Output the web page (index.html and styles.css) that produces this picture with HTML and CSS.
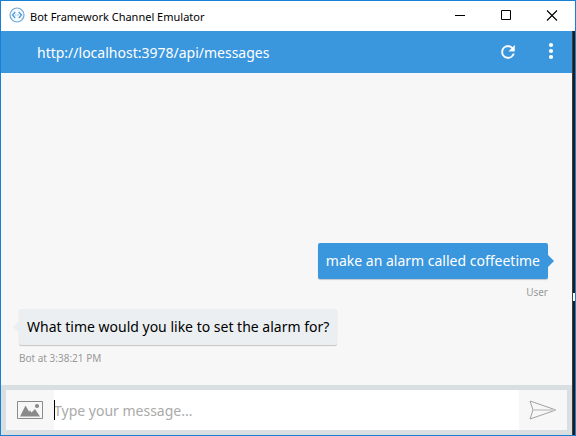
FILE: index.html
```html
<!DOCTYPE html>
<html lang="en">
<head>
<meta charset="utf-8">
<title>Bot Framework Channel Emulator</title>
<link rel="stylesheet" href="styles.css">
</head>
<body>
<div class="window">
  <header class="titlebar">
    <svg class="app-icon" viewBox="0 0 16 16" width="16" height="16" aria-hidden="true">
      <circle cx="8" cy="8" r="7" fill="#f4faff" stroke="#6fa9d8" stroke-width="1.2"/>
      <path d="M6.200 5 3.500 8l2.700 3M9.800 5 12.500 8l-2.700 3" fill="none" stroke="#4a98d6" stroke-width="1.200"/>
      <path d="M5.800 8h1M7.600 8h1M9.300 8h1" stroke="#7db5e2"/>
    </svg>
    <h1 class="title">Bot Framework Channel Emulator</h1>
    <div class="window-controls">
      <button class="window-button" type="button" aria-label="Minimize">
        <svg width="12" height="12" viewBox="0 0 12 12" shape-rendering="crispEdges"><path d="M1 5h10v1H1z"/></svg>
      </button>
      <button class="window-button" type="button" aria-label="Maximize">
        <svg width="12" height="12" viewBox="0 0 12 12"><path d="M1.500.5h9v9h-9z" fill="none" stroke="#000"/></svg>
      </button>
      <button class="window-button" type="button" aria-label="Close">
        <svg width="12" height="12" viewBox="0 0 12 12"><path d="M1 .5l10 10M11 .5l-10 10" stroke="#000" stroke-width="1.100"/></svg>
      </button>
    </div>
  </header>
  <div class="body">
    <main class="app">
      <nav class="toolbar">
        <a class="address" href="#">http://localhost:3978/api/messages</a>
        <button class="tool-button" type="button" aria-label="Refresh">
          <svg width="20" height="20" viewBox="0 0 24 24"><path fill="#fff" stroke="#fff" stroke-width=".4" d="M17.650 6.350A7.960 7.960 0 0 0 12 4a8 8 0 1 0 7.730 10h-2.080A6 6 0 1 1 12 6c1.660 0 3.140.69 4.220 1.780L13 11h7V4z"/></svg>
        </button>
        <button class="tool-button" type="button" aria-label="More options">
          <svg width="20" height="20" viewBox="0 0 20 20" fill="#fff"><circle cx="11" cy="3" r="2.100"/><circle cx="11" cy="9" r="2.100"/><circle cx="11" cy="15" r="2.100"/></svg>
        </button>
      </nav>
      <section class="chat">
        <article class="message from-user">
          <p class="bubble">make an alarm called coffeetime</p>
          <span class="meta">User</span>
        </article>
        <article class="message from-bot">
          <p class="bubble">What time would you like to set the alarm for?</p>
          <span class="meta">Bot at 3:38:21 PM</span>
        </article>
      </section>
      <form class="composer">
        <button class="composer-button" type="button" aria-label="Attach picture">
          <svg width="26" height="18" viewBox="0 0 26 18"><path d="M.5.5h25v17H.5z" fill="none" stroke="#8a8a8a"/><path d="M3 15.500 8.500 4.500l3.500 6 1-1 1.500 2 3.500-3.500 5 7.500z" fill="#8a8a8a"/><circle cx="20" cy="5" r="2.100" fill="#8a8a8a"/></svg>
        </button>
        <div class="field">
          <input class="message-input" type="text" placeholder="Type your message..." aria-label="Message">
          <span class="caret"></span>
        </div>
        <button class="composer-button" type="submit" aria-label="Send">
          <svg width="28" height="20" viewBox="0 0 28 20" fill="none" stroke="#a2a2a2"><path d="M1 1l26 9L1 19l3-9z"/><path d="M4 10h23" stroke="#c8c8c8" stroke-width="1.500"/></svg>
        </button>
      </form>
    </main>
    <div class="backdrop"><span class="backdrop-mark"></span></div>
  </div>
</div>
</body>
</html>
```

FILE: styles.css
```css
* {
  box-sizing: border-box;
}

body {
  margin: 0;
  font-family: "Noto Sans", "Open Sans", sans-serif;
}

button {
  display: flex;
  align-items: center;
  justify-content: center;
  padding: 0;
  border: 0;
  background: none;
}

.window {
  display: flex;
  flex-direction: column;
  min-height: 100vh;
  border: 1px solid #1a80d4;
  background: #fff;
}

.titlebar {
  display: flex;
  align-items: center;
  height: 30px;
  padding-left: 8px;
}

.app-icon {
  margin-bottom: 2px;
}

.title {
  flex: 1;
  margin: 0 0 0 5px;
  font-size: 11px;
  font-weight: 400;
  color: #000;
}

.window-controls {
  display: flex;
}

.window-button {
  width: 46px;
  height: 30px;
}

.body {
  display: flex;
  flex: 1;
}

.app {
  display: flex;
  flex: 1;
  flex-direction: column;
  background: #f7f7f7;
}

.toolbar {
  display: flex;
  align-items: center;
  height: 42px;
  padding: 0 1px 0 36px;
  background: #3a96dd;
}

.address {
  flex: 1;
  font-size: 14px;
  color: #fff;
  text-decoration: none;
}

.tool-button {
  width: 42px;
  height: 42px;
}

.chat {
  display: flex;
  flex: 1;
  flex-direction: column;
  justify-content: flex-end;
  gap: 8px;
  padding: 0 24px 18px 18px;
}

.message {
  display: flex;
  flex-direction: column;
  align-items: flex-start;
  gap: 4px;
}

.from-user {
  align-items: flex-end;
}

.bubble {
  position: relative;
  margin: 0;
  padding: 8px;
  border-radius: 2px;
  background: #ebeff2;
  box-shadow: 0 1px 1px rgba(0, 0, 0, 0.2);
  font-size: 14px;
  line-height: 20px;
  color: #000;
}

.from-user .bubble {
  background: #3a96dd;
  color: #fff;
}

.bubble::before {
  content: "";
  position: absolute;
  top: 12px;
  left: -6px;
  border: 6px solid transparent;
  border-left-width: 0;
  border-right-color: #ebeff2;
}

.from-user .bubble::before {
  right: -6px;
  left: auto;
  border: 6px solid transparent;
  border-right-width: 0;
  border-left-color: #3a96dd;
}

.meta {
  font-size: 10px;
  line-height: 18px;
  color: #999;
}

.composer {
  display: flex;
  height: 50px;
  border: 5px solid #d9dee1;
  background: #fff;
}

.composer-button {
  width: 48px;
  background: #f7f7f7;
}

.field {
  position: relative;
  flex: 1;
}

.message-input {
  width: 100%;
  height: 100%;
  padding: 0;
  border: 0;
  outline: 0;
  background: none;
  font: inherit;
  font-size: 14px;
}

.message-input::placeholder {
  color: #aaa;
}

.caret {
  position: absolute;
  top: 10px;
  left: 0;
  width: 1px;
  height: 20px;
  background: #000;
}

.backdrop {
  position: relative;
  width: 3px;
  border-left: 1px solid #3c3e40;
  background: #1b1d1f;
}

.backdrop-mark {
  position: absolute;
  top: 262px;
  right: 0;
  width: 2px;
  height: 8px;
  background: #fff;
}
```
